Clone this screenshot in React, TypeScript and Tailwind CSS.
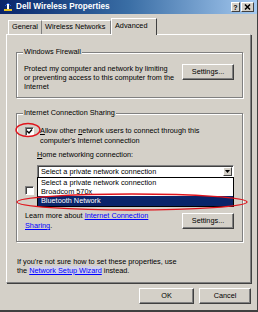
import React from "react";

const font = { fontFamily: '"Liberation Sans", Arial, sans-serif' };

function Btn({ children, className = "" }: { children: React.ReactNode; className?: string }) {
  return (
    <div
      className={`flex items-center justify-center bg-[#d4d0c8] border border-t-white border-l-white border-r-[#404040] border-b-[#404040] shadow-[inset_-1px_-1px_0_#808080] text-[7.3px] text-black ${className}`}
    >
      {children}
    </div>
  );
}

function Check({ checked }: { checked?: boolean }) {
  return (
    <div className="w-[9px] h-[9px] bg-white border border-t-[#808080] border-l-[#808080] border-r-white border-b-white shadow-[inset_1px_1px_0_#404040] flex items-center justify-center shrink-0">
      {checked && (
        <svg width="7" height="7" viewBox="0 0 7 7">
          <path d="M1 3 L3 5 L6 1.5" stroke="#000" strokeWidth="1.4" fill="none" />
        </svg>
      )}
    </div>
  );
}

export default function App() {
  return (
    <div
      style={font}
      className="w-[258px] h-[312px] bg-[#d4d0c8] flex flex-col border-r border-b-2 border-[#404040] text-black overflow-hidden relative"
    >
      {/* Title bar */}
      <div className="h-[14px] shrink-0 bg-linear-to-r from-[#0a246a] via-[#3a6ea5] to-[#a6caf0] flex items-center pl-[3px] pr-[3px]">
        <svg width="10" height="10" viewBox="0 0 10 10" className="shrink-0">
          <rect x="1" y="7" width="8" height="2" fill="#e8c020" />
          <rect x="4" y="2" width="2" height="5" fill="#ffffff" />
          <path d="M2 4 L5 1 L8 4" stroke="#2a5cd0" strokeWidth="1" fill="none" />
        </svg>
        <span className="ml-[3px] text-white font-bold text-[8.2px] leading-none">Dell Wireless Properties</span>
        <div className="ml-auto flex items-center gap-[1px]">
          <div className="w-[9px] h-[10px] bg-[#d4d0c8] border border-t-white border-l-white border-r-[#404040] border-b-[#404040] flex items-center justify-center text-[7px] font-bold leading-none">?</div>
          <div className="w-[13px] h-[10px] bg-[#d4d0c8] border border-t-white border-l-white border-r-[#404040] border-b-[#404040] flex items-center justify-center">
            <svg width="7" height="6" viewBox="0 0 7 6">
              <path d="M1 0.5 L6 5.5 M6 0.5 L1 5.5" stroke="#000" strokeWidth="1.5" />
            </svg>
          </div>
        </div>
      </div>

      {/* Tabs */}
      <div className="h-[20px] shrink-0 flex items-end pl-[8px]">
        <div className="h-[14px] w-[34px] border-t border-l border-white border-r border-r-[#808080] flex items-center pl-[3px] text-[7.3px]">General</div>
        <div className="h-[14px] w-[69px] border-t border-white flex items-center pl-[3px] text-[7.3px] border-r border-r-[#808080]">Wireless Networks</div>
        <div className="h-[17px] w-[46px] -mb-[1px] relative z-10 bg-[#d4d0c8] border-t border-l border-white border-r border-r-[#404040] flex items-center pl-[3px] pb-[2px] text-[7.3px]">Advanced</div>
      </div>

      {/* Panel */}
      <div className="mx-[6px] h-[249px] shrink-0 border border-t-white border-l-white border-r-[#808080] border-b-[#808080] shadow-[1px_1px_0_#404040] flex flex-col pl-[9px] pr-[7px] pt-[17px]">
        {/* Windows Firewall */}
        <div className="relative h-[46px] shrink-0 border border-[#808080] shadow-[inset_1px_1px_0_#fff,1px_1px_0_#fff] flex pt-[11px] pl-[7px] pr-[8px]">
          <span className="absolute -top-[6px] left-[6px] px-[1px] bg-[#d4d0c8] text-[7.3px] leading-[10px]">Windows Firewall</span>
          <div className="w-[152px] text-[7.3px] leading-[9px]">
            Protect my computer and network by limiting or preventing access to this computer from the Internet
          </div>
          <Btn className="ml-auto w-[52px] h-[16px]">Settings...</Btn>
        </div>

        {/* Internet Connection Sharing */}
        <div className="relative mt-[15px] h-[129px] shrink-0 border border-[#808080] shadow-[inset_1px_1px_0_#fff,1px_1px_0_#fff] flex flex-col pt-[13px] pl-[8px] pr-[8px]">
          <span className="absolute -top-[6px] left-[6px] px-[1px] bg-[#d4d0c8] text-[7.3px] leading-[10px]">Internet Connection Sharing</span>
          <div className="flex items-start">
            <Check checked />
            <div className="ml-[6px] -mt-[1px] text-[7.3px] leading-[10px]">
              <span className="underline">A</span>llow other <span className="underline">n</span>etwork users to connect through this
              <br />
              computer's Internet connection
            </div>
          </div>
          <div className="ml-[12px] mt-[4px] text-[7.3px] leading-[10px]">
            <span className="underline">H</span>ome networking connection:
          </div>
          <div className="relative ml-[12px] mt-[5px] mr-[0px] h-[13px] bg-white border border-t-[#808080] border-l-[#808080] border-r-white border-b-white shadow-[inset_1px_1px_0_#404040] flex items-center pl-[3px] pr-[1px]">
            <span className="text-[7.3px] leading-none">Select a private network connection</span>
            <div className="ml-auto w-[9px] h-[9px] bg-[#d4d0c8] border border-t-white border-l-white border-r-[#404040] border-b-[#404040] flex items-center justify-center">
              <svg width="5" height="3" viewBox="0 0 5 3">
                <path d="M0 0 H5 L2.5 3 Z" fill="#000" />
              </svg>
            </div>
            {/* Dropdown list */}
            <div className="absolute left-[-1px] right-[-1px] top-full z-20 bg-white border border-black flex flex-col text-[7.3px] leading-[9px]">
              <div className="h-[9px] pl-[3px]">Select a private network connection</div>
              <div className="h-[9px] pl-[3px]">Broadcom 570x</div>
              <div className="h-[10px] pl-[3px] bg-[#0a246a] text-white leading-[10px]">Bluetooth Network</div>
            </div>
          </div>
          <div className="mt-[8px]">
            <Check />
          </div>
          <div className="mt-[16px] flex items-start">
            <div className="text-[7.3px] leading-[10px]">
              Learn more about <span className="text-[#0000ff] underline">Internet Connection</span>
              <br />
              <span className="text-[#0000ff] underline">Sharing</span>.
            </div>
            <Btn className="ml-auto mt-[2px] w-[52px] h-[16px]">Settings...</Btn>
          </div>
        </div>

        <div className="mt-[15px] ml-[1px] text-[7.3px] leading-[9px]">
          If you're not sure how to set these properties, use
          <br />
          the <span className="text-[#0000ff] underline bg-[#d0d0ea]">Network Setup Wizard</span> instead.
        </div>
      </div>

      {/* Buttons */}
      <div className="mt-[5px] flex justify-end gap-[5px] pr-[6px]">
        <Btn className="w-[55px] h-[16px]">OK</Btn>
        <Btn className="w-[52px] h-[16px]">Cancel</Btn>
      </div>

      {/* Red annotation ellipses */}
      <svg className="absolute left-0 top-0 pointer-events-none z-30" width="258" height="312" viewBox="0 0 258 312">
        <ellipse cx="28" cy="130" rx="12" ry="6.5" stroke="#e0141c" strokeWidth="1.4" fill="none" />
        <ellipse cx="132" cy="202" rx="115" ry="8" stroke="#e0141c" strokeWidth="1.3" fill="none" />
      </svg>
    </div>
  );
}
